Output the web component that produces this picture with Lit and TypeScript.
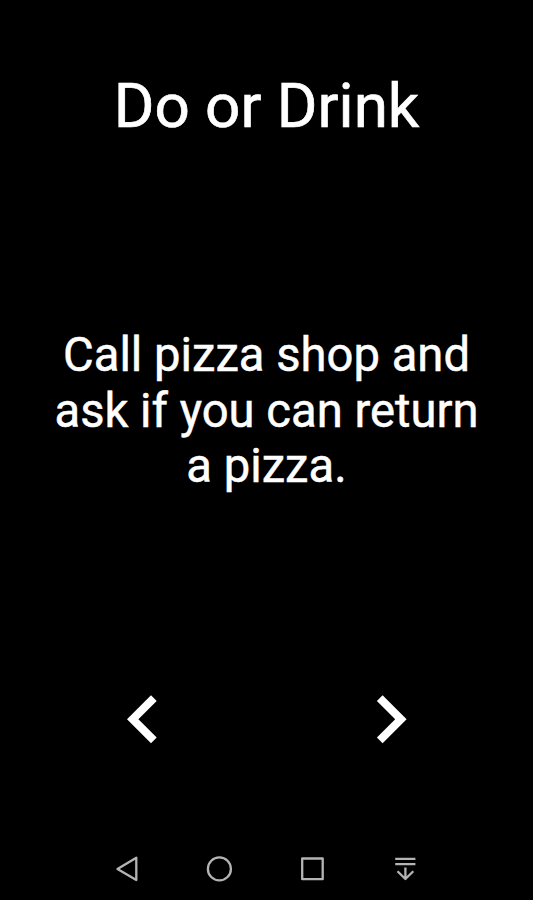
import { LitElement, html, css } from "lit";
import { customElement } from "lit/decorators.js";

@customElement("app-root")
export class AppRoot extends LitElement {
  static styles = css`
    :host { display: flex; flex-direction: column; width: 533px; height: 900px; background: #000; color: #fff; font-family: Roboto, "Noto Sans", sans-serif; overflow: hidden; }
    h1 { margin: 69.5px 0 0; height: 72.5px; font-size: 62px; line-height: 72px; font-weight: 400; text-align: center; white-space: nowrap; -webkit-text-stroke: 0.7px #fff; }
    .prompt { margin: 186px 0 0; height: 168px; font-size: 47.2px; line-height: 55.5px; text-align: center; -webkit-text-stroke: 0.5px #fff; }
    .prompt span { display: block; white-space: nowrap; }
    .arrows { margin-top: 198px; height: 50px; display: flex; justify-content: space-between; padding: 0 125px; }
    button { border: 0; background: none; padding: 0; color: inherit; display: block; width: 34px; height: 50px; }
    svg { display: block; fill: none; }
    .arrows svg { fill: currentColor; }
    .system { margin-top: auto; height: 62px; padding: 0 112px; display: flex; justify-content: space-between; align-items: center; }
    .system button { width: 30px; height: 30px; color: #b4b4b4; }
    .system svg { stroke: currentColor; stroke-width: 2.3; stroke-linejoin: round; }
  `;

  render() {
    return html`
      <h1>Do or Drink</h1>
      <div class="prompt"><span>Call pizza shop and</span><span>ask if you can return</span><span>a pizza.</span></div>
      <div class="arrows">
        <button aria-label="Previous"><svg width="34" height="50" viewBox="0 0 34 50"><path d="M2 25.200 26 1.200 31.700 6.900 13.400 25.200 31.700 43.500 26 49.200Z"/></svg></button>
        <button aria-label="Next"><svg width="34" height="50" viewBox="0 0 34 50"><path d="M32.600 25.200 8.600 1.200 2.900 6.900 21.200 25.200 2.900 43.500 8.600 49.200Z"/></svg></button>
      </div>
      <div class="system">
        <button aria-label="Back"><svg width="30" height="30" viewBox="0 0 30 30"><path d="M24.300 3.700V26.100L5.500 14.900Z"/></svg></button>
        <button aria-label="Home"><svg width="30" height="30" viewBox="0 0 30 30"><circle cx="14.400" cy="14.900" r="11.500"/></svg></button>
        <button aria-label="Recents"><svg width="30" height="30" viewBox="0 0 30 30"><rect x="4.200" y="4.500" width="20.500" height="20.700"/></svg></button>
        <button aria-label="Hide"><svg width="30" height="30" viewBox="0 0 30 30"><path d="M4.200 4.800H24.400M4.200 10.200H24.400M14.400 13.500V25M6.500 17.200L14.400 25L22.300 17.200"/></svg></button>
      </div>`;
  }
}
